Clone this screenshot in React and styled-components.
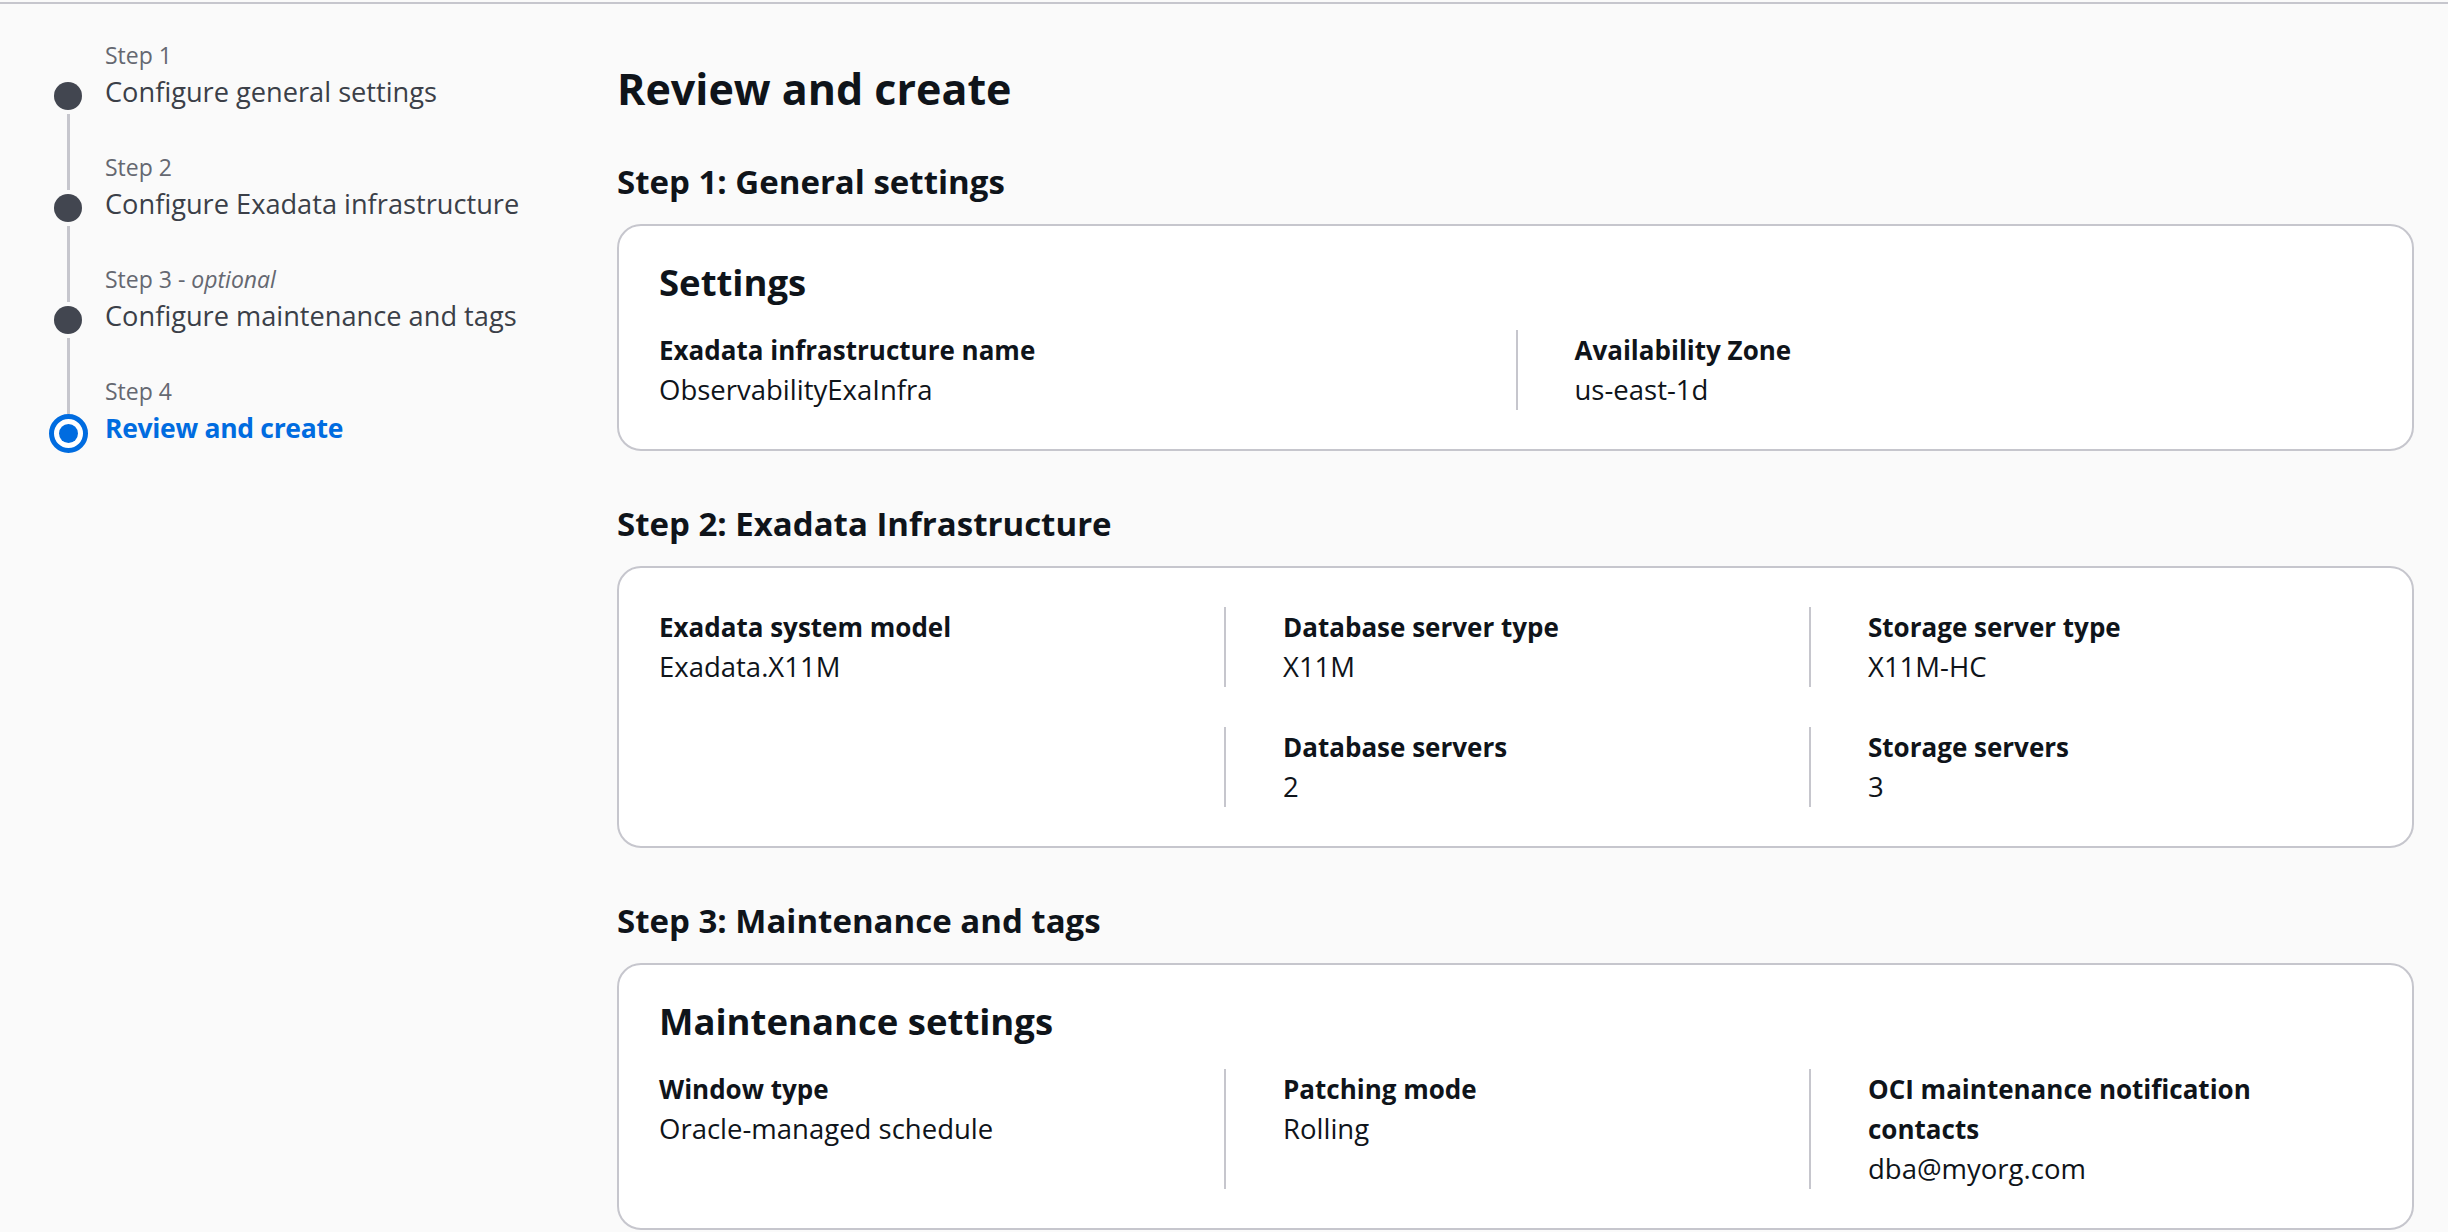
import React from "react";
import styled, { createGlobalStyle } from "styled-components";

const GlobalStyle = createGlobalStyle`
  html, body { margin: 0; padding: 0; background: #fafafa; }
  body {
    font-family: "Open Sans", "Liberation Sans", Arial, sans-serif;
    color: #0f141a;
  }
  * { box-sizing: border-box; }
`;

const Page = styled.div`
  min-height: 1232px;
  background: #fafafa;
`;

const TopRule = styled.div`
  height: 2px;
  margin-top: 2px;
  background: #c6c6cd;
`;

const Layout = styled.div`
  display: grid;
  grid-template-columns: 617px 1fr;
  padding-right: 34px;
`;

const Nav = styled.ol`
  list-style: none;
  margin: 0;
  padding: 36px 0 0 48px;
`;

const StepItem = styled.li`
  display: grid;
  grid-template-columns: 40px 1fr;
  column-gap: 17px;
  height: 112px;
`;

const Rail = styled.div`
  display: flex;
  flex-direction: column;
  align-items: center;
`;

const Segment = styled.span`
  width: 3px;
  height: 38px;
  flex: ${(p) => (p.$grow ? "1 1 auto" : "none")};
  background: ${(p) => (p.$hidden ? "transparent" : "#c6c6cd")};
`;

const DotBox = styled.span`
  height: 36px;
  display: flex;
  align-items: center;
  justify-content: center;
  flex: none;
`;

const Dot = styled.span`
  flex: none;
  width: 28px;
  height: 28px;
  border-radius: 50%;
  background: #424650;
`;

const ActiveDot = styled.span`
  flex: none;
  width: 39px;
  height: 39px;
  margin-top: 3px;
  border-radius: 50%;
  border: 5px solid #006ce0;
  background: #fff;
  display: flex;
  align-items: center;
  justify-content: center;
  &::after {
    content: "";
    width: 19px;
    height: 19px;
    border-radius: 50%;
    background: #006ce0;
  }
`;

const StepText = styled.div`
  display: flex;
  flex-direction: column;
`;

const StepNumber = styled.span`
  font-size: 23px;
  line-height: 31px;
  color: #656871;
  white-space: nowrap;
  em {
    font-style: italic;
  }
`;

const StepLabel = styled.span`
  font-size: ${(p) => (p.$active ? "26.5px" : "27.2px")};
  line-height: 42px;
  white-space: nowrap;
  color: ${(p) => (p.$active ? "#006ce0" : "#3b3f48")};
  font-weight: ${(p) => (p.$active ? 700 : 400)};
  letter-spacing: ${(p) => (p.$active ? "-0.3px" : "0")};
`;

const Main = styled.main`
  padding-top: 59px;
  display: flex;
  flex-direction: column;
`;

const PageTitle = styled.h1`
  margin: 0;
  font-size: 43px;
  line-height: 52px;
  font-weight: 700;
`;

const Section = styled.section`
  margin-top: ${(p) => (p.$first ? "47px" : "53px")};
`;

const SectionTitle = styled.h2`
  margin: 0 0 22px;
  font-size: 33px;
  line-height: 40px;
  font-weight: 700;
`;

const Card = styled.div`
  background: #fff;
  border: 2px solid #c6c6cd;
  border-radius: 24px;
  padding: 39px 40px;
`;

const CardTitle = styled.h3`
  margin: 0 0 31px;
  font-size: 36.5px;
  line-height: 34px;
  font-weight: 700;
`;

const KVGrid = styled.div`
  display: grid;
  grid-template-columns: ${(p) => p.$columns};
  row-gap: 40px;
`;

const KVCell = styled.div`
  padding: 0 40px 0 ${(p) => (p.$divided ? "57px" : "0")};
  border-left: ${(p) => (p.$divided ? "2px solid #c6c6cd" : "none")};
  min-height: 80px;
`;

const KVLabel = styled.div`
  font-size: 26px;
  line-height: 40px;
  font-weight: 700;
`;

const KVValue = styled.div`
  font-size: 27.5px;
  line-height: 40px;
`;

const steps = [
  { n: "Step 1", label: "Configure general settings" },
  { n: "Step 2", label: "Configure Exadata infrastructure" },
  { n: "Step 3", optional: true, label: "Configure maintenance and tags" },
  { n: "Step 4", label: "Review and create", active: true },
];

const sections = [
  {
    title: "Step 1: General settings",
    header: "Settings",
    columns: "1fr 1fr",
    perRow: 2,
    items: [
      { label: "Exadata infrastructure name", value: "ObservabilityExaInfra" },
      { label: "Availability Zone", value: "us-east-1d" },
    ],
  },
  {
    title: "Step 2: Exadata Infrastructure",
    columns: "565px 585px 1fr",
    perRow: 3,
    items: [
      { label: "Exadata system model", value: "Exadata.X11M" },
      { label: "Database server type", value: "X11M" },
      { label: "Storage server type", value: "X11M-HC" },
      null,
      { label: "Database servers", value: "2" },
      { label: "Storage servers", value: "3" },
    ],
  },
  {
    title: "Step 3: Maintenance and tags",
    header: "Maintenance settings",
    columns: "565px 585px 1fr",
    perRow: 3,
    items: [
      { label: "Window type", value: "Oracle-managed schedule" },
      { label: "Patching mode", value: "Rolling" },
      { label: "OCI maintenance notification contacts", value: "dba@myorg.com" },
    ],
  },
];

function WizardStep({ step, first, last }) {
  return (
    <StepItem>
      <Rail>
        <Segment $hidden={first} />
        <DotBox>{step.active ? <ActiveDot /> : <Dot />}</DotBox>
        <Segment $grow $hidden={last} />
      </Rail>
      <StepText>
        <StepNumber>
          {step.n}
          {step.optional && (
            <>
              {" - "}
              <em>optional</em>
            </>
          )}
        </StepNumber>
        <StepLabel $active={step.active}>{step.label}</StepLabel>
      </StepText>
    </StepItem>
  );
}

export default function App() {
  return (
    <Page>
      <GlobalStyle />
      <TopRule />
      <Layout>
        <Nav>
          {steps.map((s, i) => (
            <WizardStep
              key={s.n}
              step={s}
              first={i === 0}
              last={i === steps.length - 1}
            />
          ))}
        </Nav>
        <Main>
          <PageTitle>Review and create</PageTitle>
          {sections.map((sec, si) => (
            <Section key={sec.title} $first={si === 0}>
              <SectionTitle>{sec.title}</SectionTitle>
              <Card>
                {sec.header && <CardTitle>{sec.header}</CardTitle>}
                <KVGrid $columns={sec.columns}>
                  {sec.items.map((it, i) => (
                    <KVCell
                      key={i}
                      $divided={i % sec.perRow !== 0 && it !== null}
                    >
                      {it && (
                        <>
                          <KVLabel>{it.label}</KVLabel>
                          <KVValue>{it.value}</KVValue>
                        </>
                      )}
                    </KVCell>
                  ))}
                </KVGrid>
              </Card>
            </Section>
          ))}
        </Main>
      </Layout>
    </Page>
  );
}
